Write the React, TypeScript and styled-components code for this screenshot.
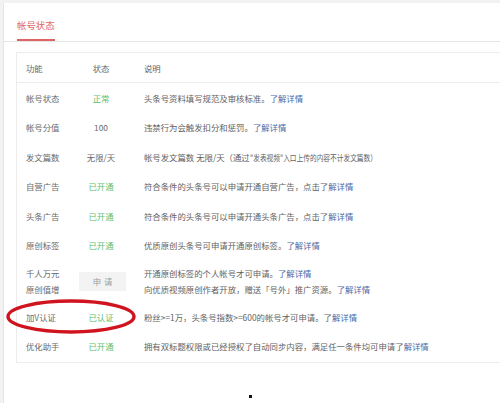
import React from 'react';
import styled, { createGlobalStyle } from 'styled-components';

const GlobalStyle = createGlobalStyle`
  html, body {
    margin: 0;
    padding: 0;
    background: #f2f2f2;
  }
  body {
    font-family: "Noto Sans CJK SC", "Noto Sans", "Liberation Sans", sans-serif;
  }
`;

const Page = styled.div`
  position: relative;
  width: 500px;
  height: 403px;
  overflow: hidden;
  background: #f2f2f2;
`;

const Card = styled.div`
  margin: 3px 0 0 3px;
  width: 560px;
  height: 420px;
  background: #fff;
  border-left: 1px solid #e4e4e4;
  box-sizing: border-box;
`;

const Tabs = styled.div`
  height: 39px;
  box-sizing: border-box;
  border-bottom: 1px solid #e6e6e6;
  padding-left: 13px;
`;

const Tab = styled.div`
  display: inline-flex;
  align-items: center;
  height: 38px;
  box-sizing: border-box;
  padding-top: 8px;
  border-bottom: 2px solid #e06463;
  color: #e06463;
  font-size: 9.4px;
`;

const Table = styled.div`
  margin: 10px 0 0 12px;
  border: 1px solid #ececec;
  border-right: none;
  padding-bottom: 1px;
  font-size: 8.4px;
  color: #666;
`;

const Row = styled.div<{ $h: number; $head?: boolean }>`
  display: grid;
  grid-template-columns: 62px 44px 1fr;
  align-items: center;
  height: ${p => p.$h}px;
  border-bottom: ${p => (p.$head ? '1px solid #ececec' : 'none')};
  box-sizing: ${p => (p.$head ? 'content-box' : 'border-box')};
  line-height: 16px;
`;

const Name = styled.div`
  padding-left: 9px;
  color: #6a6a6a;
`;

const Status = styled.div<{ $tone?: 'green' | 'plain' }>`
  text-align: center;
  color: ${p => (p.$tone === 'green' ? '#5bbf73' : '#6a6a6a')};
  white-space: nowrap;
`;

const Desc = styled.div`
  padding-left: 21px;
  white-space: nowrap;
  color: #626262;
`;

const Narrow = styled.span`
  display: inline-block;
  transform: scaleX(0.8);
  transform-origin: left center;
`;

const Link = styled.span`
  color: #4a68a6;
`;

const ApplyButton = styled.span`
  display: inline-flex;
  align-items: center;
  justify-content: center;
  width: 47px;
  height: 19px;
  background: #f3f3f3;
  color: #a0a0a0;
  letter-spacing: 3px;
  padding-left: 3px;
  box-sizing: border-box;
`;

const Ring = styled.svg`
  position: absolute;
  left: 5px;
  top: 297px;
  width: 136px;
  height: 40px;
  overflow: visible;
`;

const Dot = styled.div`
  position: absolute;
  left: 249px;
  top: 395px;
  width: 3px;
  height: 3px;
  background: #111;
`;

type Item = {
  name: React.ReactNode;
  status: React.ReactNode;
  tone?: 'green' | 'plain';
  desc: React.ReactNode;
  h?: number;
};

const rows: Item[] = [
  { name: '帐号状态', status: '正常', tone: 'green', desc: <>头条号资料填写规范及审核标准。<Link>了解详情</Link></> },
  { name: '帐号分值', status: '100', desc: <>违禁行为会触发扣分和惩罚。<Link>了解详情</Link></> },
  {
    name: '发文篇数',
    status: '无限/天',
    desc: <>帐号发文篇数 无限/天（通过<Narrow>"发表视频"入口上传的内容不计发文篇数）</Narrow></>,
  },
  { name: '自营广告', status: '已开通', tone: 'green', desc: <>符合条件的头条号可以申请开通自营广告，点击了<Link>解详情</Link></> },
  { name: '头条广告', status: '已开通', tone: 'green', desc: <>符合条件的头条号可以申请开通头条广告，点击了<Link>解详情</Link></> },
  { name: '原创标签', status: '已开通', tone: 'green', desc: <>优质原创头条号可申请开通原创标签。<Link>了解详情</Link></> },
  {
    name: <>千人万元<br />原创值增</>,
    status: <ApplyButton>申请</ApplyButton>,
    desc: (
      <>
        开通原创标签的个人帐号才可申请。<Link>了解详情</Link>
        <br />
        向优质视频原创作者开放，赠送「号外」推广资源。<Link>了解详情</Link>
      </>
    ),
    h: 42,
  },
  { name: '加V认证', status: '已认证', tone: 'green', desc: <>粉丝&gt;=1万，头条号指数&gt;=600的帐号才可申请。了<Link>解详情</Link></> },
  { name: '优化助手', status: '已开通', tone: 'green', desc: <>拥有双标题权限或已经授权了自动同步内容，满足任一条件均可申请了<Link>解详情</Link></> },
];

export default function App() {
  return (
    <>
      <GlobalStyle />
      <Page>
        <Card>
          <Tabs>
            <Tab>帐号状态</Tab>
          </Tabs>
          <Table>
            <Row $h={29} $head>
              <Name>功能</Name>
              <Status>状态</Status>
              <Desc>说明</Desc>
            </Row>
            {rows.map((r, i) => (
              <Row key={i} $h={r.h ?? 29.5}>
                <Name>{r.name}</Name>
                <Status $tone={r.tone}>{r.status}</Status>
                <Desc>{r.desc}</Desc>
              </Row>
            ))}
          </Table>
        </Card>
        <Ring viewBox="0 0 136 40">
          <ellipse cx="66" cy="19.5" rx="63" ry="15.5" fill="none" stroke="#d0141f" strokeWidth="3.4" />
        </Ring>
        <Dot />
      </Page>
    </>
  );
}
